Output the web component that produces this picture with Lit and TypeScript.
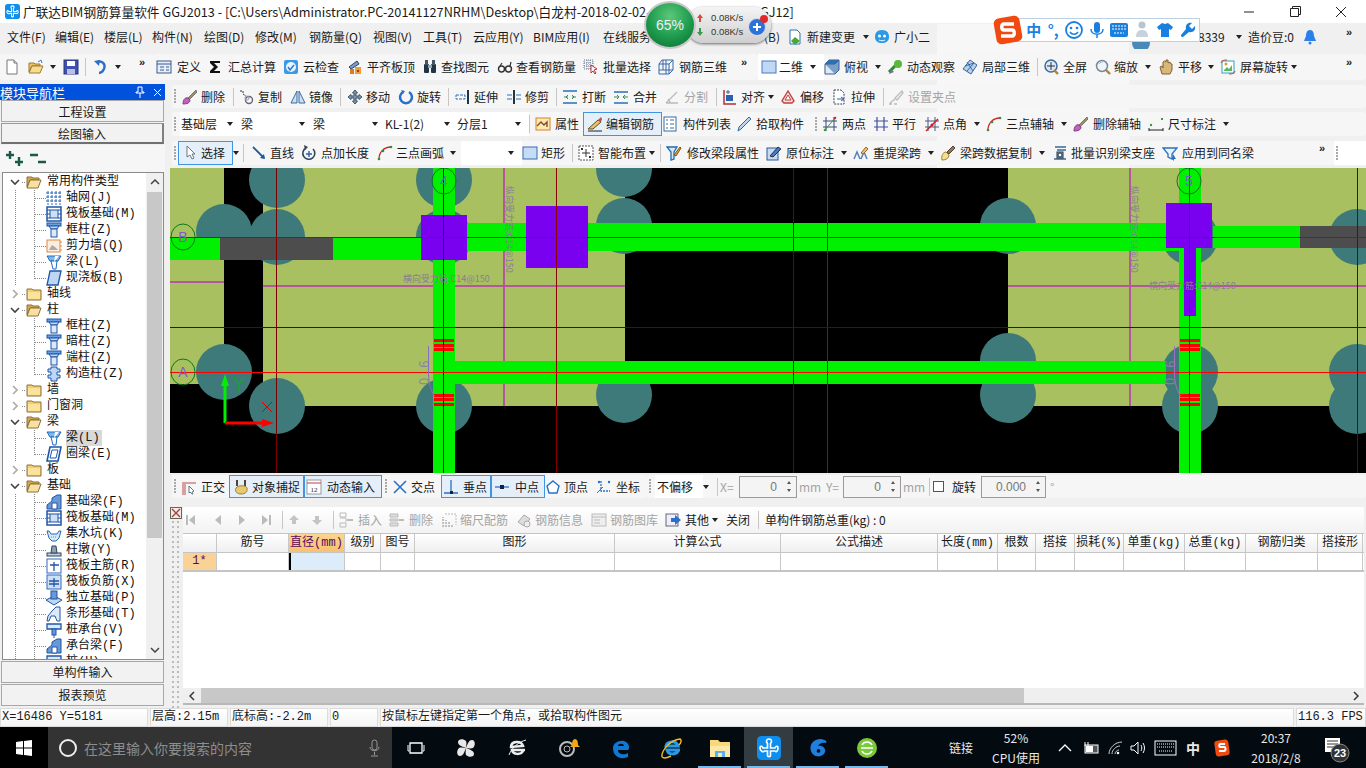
// app.ts - GGJ2013 rebar modelling window
import { LitElement, html, css, svg } from 'lit';
import { customElement } from 'lit/decorators.js';

type Item = { x: number; k: string; v?: any; end?: number; kids?: Item[]; cls?: string };

const I = (x: number, v: string): Item => ({ x, k: 'i', v });
const T = (x: number, v: string, cls = ''): Item => ({ x, k: 't', v, cls });
const A = (x: number): Item => ({ x, k: 'a' });
const S = (x: number): Item => ({ x, k: 's' });
const G = (x: number): Item => ({ x, k: 'g' });
const M = (x: number): Item => ({ x, k: 'm' });
const R = (x: number, v: any): Item => ({ x, k: 'r', v });
const Seg = (x: number, end: number, kids: Item[], cls = ''): Item => ({ x, k: 'seg', end, kids, cls });

const s16 = (body: any) => html`<svg class="ic" width="16" height="16" viewBox="0 0 16 16">${body}</svg>`;

const ICONS: Record<string, any> = {
  new: s16(svg`<path d="M3 1h7l3 3v11H3z" fill="#fff" stroke="#777"/><path d="M10 1v3h3" fill="#ddd" stroke="#777"/>`),
  open: s16(svg`<path d="M1 4h5l1 1h5v2H4L1 13z" fill="#e8c060" stroke="#a07a30"/><path d="M1 14l3-7h11l-3 7z" fill="#f6dc90" stroke="#a07a30"/><path d="M10 3l3-2 1 3" fill="none" stroke="#3a7ac8"/>`),
  save: s16(svg`<rect x="1" y="1" width="14" height="14" fill="#3f51b0" stroke="#2a3580"/><rect x="4" y="2" width="8" height="5" fill="#fff"/><rect x="4" y="10" width="8" height="5" fill="#b8c0e8"/>`),
  undo: s16(svg`<path d="M5 3c5-2 9 2 7 7-1 2-3 4-5 4" fill="none" stroke="#2a70c8" stroke-width="2.4"/><path d="M2 2l6-1-1 6z" fill="#2a70c8"/>`),
  def: s16(svg`<rect x="1" y="2" width="14" height="12" fill="#e8eef8" stroke="#3a5a90"/><path d="M1 5h14M4 8h4M4 11h4M10 8h3M10 11h3" stroke="#3a5a90"/>`),
  sigma: s16(svg`<path d="M3 2h10v2H7l4 4-4 4h6v2H3v-2l4-4-4-4z" fill="#111"/>`),
  cloud: s16(svg`<rect x="1" y="1" width="14" height="14" rx="2" fill="#3a9ae8"/><circle cx="8" cy="8" r="5" fill="#e8f4ff"/><path d="M5 8l2 3 4-5" fill="none" stroke="#2a7ad0" stroke-width="1.5"/>`),
  level: s16(svg`<path d="M2 8l8-6 2 3-8 5z" fill="#7a9ad0" stroke="#345"/><rect x="3" y="10" width="4" height="5" fill="#e07820"/><rect x="8" y="8" width="6" height="7" fill="#e8a030"/><rect x="10" y="11" width="2" height="2" fill="#a33"/>`),
  find: s16(svg`<rect x="2" y="5" width="5" height="9" rx="1" fill="#234"/><rect x="9" y="5" width="5" height="9" rx="1" fill="#234"/><rect x="3" y="1" width="3" height="5" fill="#456"/><rect x="10" y="1" width="3" height="5" fill="#456"/><rect x="6" y="6" width="4" height="3" fill="#8ab"/>`),
  glass: s16(svg`<circle cx="4.5" cy="10" r="3" fill="none" stroke="#333" stroke-width="1.4"/><circle cx="11.5" cy="10" r="3" fill="none" stroke="#333" stroke-width="1.4"/><path d="M3 7l2-3M13 7l1-4M7.5 10h1" stroke="#333" stroke-width="1.2" fill="none"/>`),
  bsel: s16(svg`<path d="M1 1h9v9H1zM1 4h9M1 7h9M4 1v9M7 1v9" fill="none" stroke="#6a7a90" stroke-dasharray="1 1"/><path d="M8 6l6 4-3 1 2 3-1 1-2-3-2 2z" fill="#fff" stroke="#c03030"/>`),
  r3d: s16(svg`<path d="M4 1h11v10l-4 4H1V5zM1 5h10v10M11 5l4-4M5 1v10h10M1 11h4M8 1v14" fill="none" stroke="#3868a8"/>`),
  d2: s16(svg`<rect x="1" y="2" width="14" height="12" fill="#c0d8f4" stroke="#4a7ac0"/>`),
  top: s16(svg`<path d="M1 5l4-4h10l-4 4v10H1z" fill="#dfe9f5" stroke="#345f90"/><path d="M1 5h10l4-4v10l-4 4" fill="#7aa0c8" stroke="#345f90"/><path d="M1 5l4-4h10l-4 4z" fill="#2f6fb0"/>`),
  orbit: s16(svg`<path d="M2 13L13 2" stroke="#2c8a2c" stroke-width="3"/><circle cx="11" cy="5" r="4" fill="#5cb83c"/><path d="M2 15l5-2-3-3z" fill="#678"/>`),
  l3d: s16(svg`<path d="M8 1l7 5-6 9-8-5z" fill="#b8d0ec" stroke="#3a6aa0"/><path d="M5 3l6 9M3 7l9-3M5 12l7-8" stroke="#3a6aa0" fill="none"/>`),
  full: s16(svg`<circle cx="8" cy="7" r="6" fill="#dde8f4" stroke="#3a6aa0" stroke-width="1.5"/><path d="M8 3v8M4 7h8" stroke="#234"/><path d="M11 11l4 4" stroke="#b08040" stroke-width="2.4"/>`),
  zoom: s16(svg`<circle cx="7" cy="7" r="5.5" fill="#eef4fa" stroke="#789" stroke-width="1.5"/><path d="M11 11l4 4" stroke="#b08040" stroke-width="2.4"/><path d="M4 5c1-2 3-2 4-2" stroke="#abc" fill="none"/>`),
  pan: s16(svg`<path d="M4 15L2 8l2-1 1 2V3l1.500-1L8 3v-2h2v3l2-1 1 2 1 0v6l-2 4z" fill="#d8b878" stroke="#806030"/>`),
  rot: s16(svg`<rect x="2" y="2" width="12" height="12" fill="#fff" stroke="#30a0c0"/><path d="M4 11l3-3 2 2 3-4v6H4z" fill="#5cb85c"/><circle cx="6" cy="5" r="1.500" fill="#e0a020"/><path d="M1 4c1-3 4-3 6-3M15 12c-1 3-4 3-6 3" stroke="#d03030" fill="none"/>`),
  del: s16(svg`<path d="M15 1L7 9l1 2 8-8z" fill="#a09060" stroke="#777"/><path d="M2 15c0-4 2-7 5-6l2 2c0 3-3 4-7 4z" fill="#c060c0" stroke="#804080"/>`),
  copy: s16(svg`<circle cx="11" cy="11" r="3.500" fill="none" stroke="#667" stroke-width="1.400"/><circle cx="9" cy="9" r="2" fill="none" stroke="#99a"/><path d="M2 2h3v3M5 5l3 2" stroke="#334" fill="none" stroke-dasharray="2 1"/>`),
  mirror: s16(svg`<path d="M7 2v12H1zM9 2v12h6z" fill="#cde0f4" stroke="#3a6aa0"/>`),
  move: s16(svg`<path d="M8 1l2.500 3H9v3h3V5.500L15 8l-3 2.500V9H9v3h1.500L8 15l-2.500-3H7V9H4v1.500L1 8l3-2.500V7h3V4H5.500z" fill="#7a96b0" stroke="#456"/>`),
  rotate: s16(svg`<path d="M5 3a6 6 0 1 0 6 0" fill="none" stroke="#2a70c8" stroke-width="2.500"/><path d="M3 1l4 1-2 3z" fill="#2a70c8"/>`),
  extend: s16(svg`<path d="M1 6h9v4H1z" fill="none" stroke="#2a70b8" stroke-dasharray="3 1"/><path d="M13 1v14" stroke="#234" stroke-width="2"/>`),
  trim: s16(svg`<path d="M1 6h5M1 10h5M10 6h5M10 10h5" stroke="#2a70b8"/><path d="M8 1v14" stroke="#234" stroke-width="2"/>`),
  brk: s16(svg`<path d="M1 2h14M1 14h14" stroke="#2a70b8" stroke-width="1.500"/><path d="M2 8h4M14 8h-4M6 6l-2 2 2 2M10 6l2 2-2 2" stroke="#3a8a5a" fill="none"/>`),
  merge: s16(svg`<path d="M1 3h14M1 14h14" stroke="#2a70b8" stroke-width="1.500"/><path d="M1 8h5M15 8h-5M4 6l2 2-2 2M12 6l-2 2 2 2" stroke="#3a8a5a" fill="none"/>`),
  split: s16(svg`<path d="M2 14L13 3M2 14h12M6 14c0-2-1-3-2-4" stroke="#bbb" fill="none" stroke-width="1.300"/>`),
  align: s16(svg`<path d="M2 1v14h12" stroke="#b03030" stroke-width="1.500" fill="none"/><rect x="4" y="6" width="7" height="6" fill="#2a60b0"/><path d="M6 1v4M4 3h4" stroke="#2a60b0"/>`),
  offset: s16(svg`<path d="M8 2l6 10-2 2H4l-2-2z" fill="#f8e0d8" stroke="#c04040" stroke-width="1.400"/><path d="M8 6l3 5H5z" fill="#fff" stroke="#c04040"/>`),
  stretch: s16(svg`<path d="M3 1h7l3 3v11H3z" fill="#fff" stroke="#345" stroke-dasharray="2 1"/><path d="M6 10h7M10 8l3 2-3 2" stroke="#2a60b0" fill="none"/>`),
  grip: s16(svg`<path d="M14 2L7 9l2 2 6-7zM2 14l5-4M1 15h3M6 15h3" stroke="#bbb" fill="none" stroke-width="1.300"/>`),
  prop: s16(svg`<rect x="1" y="2" width="14" height="12" fill="#fde8b8" stroke="#d88020"/><path d="M2 10l4-4 3 3 3-3v5" fill="none" stroke="#805020" stroke-width="1.400"/>`),
  rebar: s16(svg`<path d="M1 13l10-9 3 2-8 7z" fill="#e8c070" stroke="#605020"/><path d="M11 4l3-3 1 2-1 3z" fill="#c05050"/><path d="M1 15h14" stroke="#222"/>`),
  list: s16(svg`<rect x="2" y="1" width="12" height="14" fill="#fff" stroke="#3a6aa0"/><path d="M4 4h2M8 4h4M4 8h2M8 8h4M4 12h2M8 12h4" stroke="#3a6aa0"/>`),
  pick: s16(svg`<path d="M13 1l2 2-3 3-1 1-6 6-3 2 1-4 6-6 1-1z" fill="#bcd4ee" stroke="#2a6ab0"/>`),
  two: s16(svg`<path d="M4 1v14M12 1v14M1 5h14M1 11h14" stroke="#3a4a80"/><path d="M3 14L13 2" stroke="#3a9a3a"/><circle cx="13" cy="2" r="1.300" fill="#c03030"/><circle cx="3" cy="14" r="1.300" fill="#3a9a3a"/>`),
  para: s16(svg`<path d="M4 1v14M11 1v14M1 5h14M1 11h14" stroke="#4050a0" stroke-width="1.200"/>`),
  angle: s16(svg`<path d="M4 1v14M11 1v14M1 5h14M1 11h14" stroke="#4a5a88"/><path d="M2 15L14 3" stroke="#d02020" stroke-width="1.500"/><circle cx="8" cy="9" r="1.500" fill="#d02020"/>`),
  arc3: s16(svg`<path d="M2 14C2 7 7 2 14 2" fill="none" stroke="#d02020" stroke-width="1.300"/><circle cx="2" cy="14" r="1.300" fill="#3a8a3a"/><circle cx="6" cy="6" r="1.300" fill="#3a8a3a"/><circle cx="14" cy="2" r="1.300" fill="#3a8a3a"/>`),
  dim: s16(svg`<path d="M1 12v3M15 12v3M1 14h14" stroke="#222"/><circle cx="3" cy="9" r="1.200" fill="#3a9a3a"/><rect x="13" y="2" width="2" height="2" fill="#3a9a3a"/>`),
  select: s16(svg`<path d="M4 1v11l3-2 2 4 2-1-2-4h3z" fill="#fff" stroke="#678"/>`),
  line: s16(svg`<path d="M2 2l11 11" stroke="#1e5a98" stroke-width="1.800"/><path d="M14 14l-5-1 4-4z" fill="#1e5a98"/>`),
  ptlen: s16(svg`<path d="M5 3a6 6 0 1 0 7 1" fill="none" stroke="#345" stroke-width="1.600"/><path d="M8 6v6M5 9h6" stroke="#2a60b0" stroke-width="1.400"/><path d="M3 0l4 2-3 3z" fill="#345"/>`),
  rect: s16(svg`<rect x="1" y="2" width="14" height="12" fill="#c4dcf6" stroke="#3a6ab0"/>`),
  smart: s16(svg`<rect x="1" y="1" width="14" height="14" fill="#fff" stroke="#555" stroke-dasharray="2 1"/><path d="M8 4v8M4 8h8" stroke="#333"/><rect x="3" y="3" width="2" height="2" fill="#333"/><rect x="11" y="11" width="2" height="2" fill="#333"/>`),
  funnel: s16(svg`<path d="M1 2h10l-3 5v7l-3 1V7z" fill="#d8e8f8" stroke="#1f6ab0" stroke-width="1.300"/><path d="M8 10l6-8 1 1-5 8z" fill="#e0a030" stroke="#805020"/>`),
  inplace: s16(svg`<rect x="1" y="3" width="11" height="12" fill="#c8daf0" stroke="#2a5a9a"/><path d="M4 11l8-9 3 2-8 8z" fill="#4a78c0" stroke="#234"/>`),
  rspan: s16(svg`<path d="M1 14l3-7 3 7M8 14l3-7 3 7" fill="none" stroke="#5a80b8" stroke-width="1.500"/><path d="M8 8l5-6 2 2-5 5z" fill="#e8c080" stroke="#a06030"/>`),
  brush: s16(svg`<path d="M2 15c-1-4 1-8 4-8l3 3c0 3-3 5-7 5z" fill="#f0e090" stroke="#a08030"/><path d="M7 7l6-6 2 2-6 6z" fill="#8a7a60" stroke="#543"/>`),
  bident: s16(svg`<path d="M3 2h11M5 5h9M2 14h12" stroke="#3a6a9a" stroke-width="1.500"/><rect x="5" y="7" width="6" height="6" fill="#8ab0d0" stroke="#234"/><circle cx="8" cy="10" r="2" fill="#fff" stroke="#234"/>`),
  same: s16(svg`<path d="M1 3h14l-5 6v5l-4-2V9z" fill="#e8f2fb" stroke="#2a70c0" stroke-width="1.300"/><path d="M11 9l3 5-2 0 0 2-2-2z" fill="#2a70c0"/>`),
  ortho: s16(svg`<path d="M1 3h14v2H5v11H1z" fill="#d8a0a0"/><path d="M8 7l5 5-2 1 1 2-1 0-2-2-1 1z" fill="#fff" stroke="#678"/>`),
  snap: s16(svg`<path d="M4 1v6M12 1v6" stroke="#543" stroke-width="2"/><path d="M3 9c2-3 10-3 11 0 1 4-2 6-6 6-3 0-7-2-5-6z" fill="#e8c870" stroke="#a08030"/>`),
  dyn: s16(svg`<rect x="1" y="1" width="14" height="14" fill="#fff" stroke="#999"/><path d="M1 4h14" stroke="#c04040"/><text x="8" y="13" font-size="7" text-anchor="middle" font-family="Liberation Serif" fill="#222">12</text>`),
  cross: s16(svg`<path d="M2 2l12 12M14 2L2 14" stroke="#2a70c8" stroke-width="1.600"/>`),
  perp: s16(svg`<path d="M8 1v13M1 14h14" stroke="#2a70c8" stroke-width="1.300"/><rect x="7" y="12" width="3" height="3" fill="#124"/>`),
  mid: s16(svg`<path d="M1 8h14" stroke="#2a70c8" stroke-width="1.300"/><rect x="6" y="6" width="4" height="4" fill="#124"/>`),
  vert: s16(svg`<path d="M8 2l6 5-2 7H4L2 7z" fill="#fff" stroke="#2a70c8" stroke-width="1.400"/>`),
  coord: s16(svg`<path d="M5 2v10h9" stroke="#2a70c8" stroke-width="1.300" fill="none" stroke-dasharray="2 1"/><path d="M1 14l6-6" stroke="#2a70c8"/><circle cx="3" cy="3" r="1.200" fill="#2a70c8"/><circle cx="13" cy="3" r="1.200" fill="#2a70c8"/>`),
  first: s16(svg`<path d="M4 3v10" stroke="#bbb" stroke-width="2"/><path d="M12 3v10L6 8z" fill="#bbb"/>`),
  prev: s16(svg`<path d="M11 3v10L5 8z" fill="#bbb"/>`),
  next: s16(svg`<path d="M5 3v10l6-5z" fill="#bbb"/>`),
  last: s16(svg`<path d="M12 3v10" stroke="#bbb" stroke-width="2"/><path d="M4 3v10l6-5z" fill="#bbb"/>`),
  up: s16(svg`<path d="M8 3l5 5h-3v4H6V8H3z" fill="#c4c4c4"/>`),
  down: s16(svg`<path d="M8 13l5-5h-3V4H6v4H3z" fill="#c4c4c4"/>`),
  ins: s16(svg`<path d="M2 1h6v4H2zM2 11h6v4H2zM2 6h6v4" fill="none" stroke="#bbb"/><path d="M9 8h6" stroke="#bbb" stroke-width="2"/>`),
  rem: s16(svg`<path d="M1 2h8v3H1zM1 7h8v2H1zM1 11h8v3H1z" fill="#ddd" stroke="#bbb"/><path d="M10 8h5" stroke="#bbb" stroke-width="2"/>`),
  scale: s16(svg`<path d="M1 15V5M4 15V8M7 15v-5M10 15v-2" stroke="#aaa" stroke-width="1.400" stroke-dasharray="2 1"/><path d="M3 2h11v11" stroke="#bbb" fill="none" stroke-dasharray="2 1"/>`),
  info: s16(svg`<path d="M2 10l6-7 6 4-6 7z" fill="#ddd" stroke="#aaa"/><circle cx="11" cy="12" r="3" fill="#eee" stroke="#aaa"/>`),
  lib: s16(svg`<rect x="1" y="2" width="14" height="12" fill="#eee" stroke="#bbb"/><path d="M1 5h14M3 8h6M3 11h6" stroke="#bbb"/>`),
  other: s16(svg`<rect x="1" y="2" width="12" height="12" fill="#eef" stroke="#667"/><path d="M6 6h4V3l6 5-6 5v-3H6z" fill="#2a70c8"/>`),
  newchg: s16(svg`<path d="M3 1h7l3 3v11H3z" fill="#fff" stroke="#2a70b8"/><path d="M8 8l5 4-5 4-4-4z" fill="#4aa83a"/>`),
  xiao: s16(svg`<path d="M8 1c5 0 7 3 7 7 0 4-3 6-7 6s-7-2-7-6c0-4 2-7 7-7z" fill="#2a9ae8"/><circle cx="5.500" cy="7" r="1.500" fill="#fff"/><circle cx="10.500" cy="7" r="1.500" fill="#fff"/><path d="M5 11c2 1 4 1 6 0" stroke="#fff" fill="none"/>`),
  bell: s16(svg`<path d="M8 1c3 0 4 3 4 6l2 5H2l2-5c0-3 1-6 4-6z" fill="#2a80e8"/><circle cx="8" cy="14" r="1.500" fill="#2a80e8"/>`),
};

const TREE: Record<string, any> = {
  grid: s16(svg`<path d="M2 1v14M6 1v14M10 1v14M14 1v14M0 3h16M0 7h16M0 11h16" stroke="#2f6ac0" fill="none" stroke-dasharray="3 1"/>`),
  raft: s16(svg`<rect x="1" y="1" width="14" height="14" fill="#fff" stroke="#1f55a8" stroke-width="1.500"/><rect x="4" y="4" width="8" height="8" fill="#cfe0f4" stroke="#1f55a8"/><path d="M1 4h3M1 8h3M1 12h3M12 4h3M12 8h3M12 12h3" stroke="#1f55a8"/>`),
  col: s16(svg`<rect x="1" y="1" width="14" height="3" fill="#6aa0e0" stroke="#1f55a8"/><path d="M3 4h10L11 7H5z" fill="#bcd6f4" stroke="#1f55a8"/><rect x="5" y="7" width="6" height="8" fill="#dbe9f8" stroke="#1f55a8"/>`),
  wall: s16(svg`<rect x="1" y="2" width="13" height="12" fill="#fbeee0" stroke="#e08840"/><path d="M3 12l3-5 3 2 3 3z" fill="#aaa"/><path d="M14 4h2M14 8h2M14 12h2" stroke="#e08840"/>`),
  beam: s16(svg`<path d="M1 2h14l-3 5H4z" fill="#7ab8ee" stroke="#1f6ac0"/><path d="M5 7h6l-1 8H7z" fill="#fff" stroke="#1f6ac0"/><path d="M9 2l4 0-5 6z" fill="#fff"/>`),
  slab: s16(svg`<path d="M4 1h11l-3 14H1z" fill="#bcd6f4" stroke="#1f55a8" stroke-width="1.300"/>`),
  ccol: s16(svg`<path d="M5 1h6v2h3v3h-3v3h3v3h-3v3H5v-3H2V9h3V6H2V3h3z" fill="#bcd6f4" stroke="#1f55a8"/>`),
  ring: s16(svg`<path d="M4 1h11l-3 14H1z" fill="#fff" stroke="#1f55a8" stroke-width="1.600"/><path d="M6 4h6l-2 8H4z" fill="#fff" stroke="#1f55a8"/>`),
  fbeam: s16(svg`<path d="M1 15V11l5-4V4l5-3h4v14z" fill="#6a98d4" stroke="#1f55a8"/><path d="M6 15V9h5v6z" fill="#fff" stroke="#1f55a8"/>`),
  pit: s16(svg`<path d="M1 5l2 0 2 3h6l2-3h2l-2 7-3 3H6l-3-3z" fill="#d8e8f8" stroke="#1f6ac0"/><path d="M5 11h6" stroke="#888" stroke-dasharray="1 1"/>`),
  pier: s16(svg`<rect x="1" y="11" width="14" height="3" fill="#c4d0e0" stroke="#345"/><path d="M6 4h4l1 7H5z" fill="#8aa0bc" stroke="#345"/>`),
  rmain: s16(svg`<rect x="1" y="1" width="14" height="14" fill="#fff" stroke="#2f6ac0"/><path d="M4 7h9M8 4v9" stroke="#1f55a8" stroke-width="1.300"/>`),
  rneg: s16(svg`<rect x="1" y="1" width="14" height="14" fill="#cfe0f4" stroke="#2f6ac0"/><path d="M3 7h10M3 10h10M8 4v9" stroke="#1f55a8" stroke-width="1.300"/>`),
  iso: s16(svg`<path d="M0 10l8-4 8 4-8 5z" fill="#bcd6f4" stroke="#1f55a8"/><rect x="5" y="1" width="6" height="8" fill="#6a98d4" stroke="#1f55a8"/>`),
  strip: s16(svg`<path d="M1 15l1-5 4-5 4-4h4v14h-3l-2-5-4 0-2 5z" fill="#dbe9f8" stroke="#1f55a8"/>`),
  cap: s16(svg`<path d="M1 2h14v5H1z" fill="#dbe9f8" stroke="#1f55a8" stroke-width="1.300"/><rect x="6" y="7" width="4" height="6" fill="#6a98d4" stroke="#1f55a8"/><path d="M8 13v3" stroke="#1f55a8"/>`),
};

const gld = (n: number) => html`<svg class="ic" width=${n} height=${n} viewBox="0 0 16 16"><rect width="16" height="16" rx="3" fill="#0e8ff0"/><path d="M8 2c-2 0-2 2-1 3v3H4C3 6 2 7 2 8c0 2 2 3 3 2h2v3c0 1 2 1 2 0v-3h3c1 1 2 0 2-2 0-1-1-2-2 0H9V5c1-1 1-3-1-3z" fill="none" stroke="#fff" stroke-width="1.100"/></svg>`;

const TITLE: Item[] = [
  T(23, '广联达BIM钢筋算量软件 GGJ2013 - [C:\\Users\\Administrator.PC-20141127NRHM\\Desktop\\白龙村-2018-02-02-'),
  T(760, 'GJ12]'),
];

const ROW1: Item[] = [
  Seg(0, 152, [I(4, 'new'), I(28, 'open'), A(50), I(63, 'save'), S(85), I(92, 'undo'), A(115), M(139)]),
  Seg(153, 754, [I(156, 'def'), T(177, '定义'), I(207, 'sigma'), T(228, '汇总计算'), I(283, 'cloud'), T(303, '云检查'), I(347, 'level'), T(367, '平齐板顶'),
    I(422, 'find'), T(441, '查找图元'), I(497, 'glass'), T(516, '查看钢筋量'), I(583, 'bsel'), T(603, '批量选择'), I(658, 'r3d'), T(679, '钢筋三维'), M(741)]),
  Seg(757, 1366, [Seg(758, 820, [I(761, 'd2'), T(779, '二维'), A(810)], 'white'), I(824, 'top'), T(844, '俯视'), A(875), I(887, 'orbit'), T(907, '动态观察'), I(962, 'l3d'), T(982, '局部三维'),
    S(1037), I(1043, 'full'), T(1063, '全屏'), I(1095, 'zoom'), T(1114, '缩放'), A(1145), I(1158, 'pan'), T(1178, '平移'), A(1208), I(1220, 'rot'), T(1240, '屏幕旋转'), A(1291), M(1346)]),
];

const ROW2: Item[] = [
  Seg(172, 961, [G(174), I(181, 'del'), T(201, '删除'), S(233), I(238, 'copy'), T(258, '复制'), I(290, 'mirror'), T(309, '镜像'), S(340), I(347, 'move'), T(366, '移动'), I(398, 'rotate'), T(417, '旋转'),
    S(448), I(455, 'extend'), T(474, '延伸'), I(506, 'trim'), T(525, '修剪'), S(556), I(562, 'brk'), T(582, '打断'), I(613, 'merge'), T(633, '合并'), I(664, 'split'), T(684, '分割', 'dis'),
    S(716), I(722, 'align'), T(741, '对齐'), A(768), I(780, 'offset'), T(800, '偏移'), I(831, 'stretch'), T(851, '拉伸'), S(883), I(888, 'grip'), T(908, '设置夹点', 'dis')]),
];

const ROW3: Item[] = [
  Seg(172, 808, [G(174), Seg(180, 238, [T(181, '基础层'), A(227)], 'white'), Seg(239, 308, [T(241, '梁'), A(299)], 'white'), Seg(311, 380, [T(313, '梁'), A(372)], 'white'),
    Seg(383, 452, [T(385, 'KL-1(2)'), A(444)], 'white'), Seg(455, 525, [T(457, '分层1'), A(515)], 'white'), S(529), I(535, 'prop'), T(555, '属性'),
    Seg(583, 658, [I(587, 'rebar'), T(606, '编辑钢筋')], 'on'), I(662, 'list'), T(683, '构件列表'), I(736, 'pick'), T(756, '拾取构件')]),
  Seg(811, 1233, [G(815), I(822, 'two'), T(842, '两点'), I(873, 'para'), T(892, '平行'), I(924, 'angle'), T(943, '点角'), A(974), I(986, 'arc3'), T(1006, '三点辅轴'), A(1061), I(1072, 'del'), T(1093, '删除辅轴'), I(1148, 'dim'), T(1168, '尺寸标注'), A(1223)]),
];

const ROW4: Item[] = [
  Seg(172, 1332, [G(174), Seg(178, 229, [I(183, 'select'), T(201, '选择')], 'on'), A(233), S(243), I(251, 'line'), T(270, '直线'), I(301, 'ptlen'), T(321, '点加长度'), I(377, 'arc3'), T(396, '三点画弧'), A(450),
    Seg(461, 517, [A(508)], 'white'), I(522, 'rect'), T(541, '矩形'), S(572), I(578, 'smart'), T(598, '智能布置'), A(649), S(660), I(666, 'funnel'), T(687, '修改梁段属性'), I(766, 'inplace'), T(786, '原位标注'), A(841),
    I(853, 'rspan'), T(873, '重提梁跨'), A(928), I(940, 'brush'), T(960, '梁跨数据复制'), A(1039), I(1052, 'bident'), T(1071, '批量识别梁支座'), I(1162, 'same'), T(1182, '应用到同名梁'), M(1319)]),
  Seg(1334, 1366, [G(1336)], 'white'),
];

const spin = (w: number, v: string) => html`<span class="num" style="width:${w}px"><b>${v}</b><i class="sp"><u class="tu"></u><u class="td"></u></i></span>`;

const SNAP: Item[] = [
  Seg(172, 382, [G(174), I(181, 'ortho'), T(201, '正交'), Seg(229, 304, [I(233, 'snap'), T(252, '对象捕捉')], 'on'), Seg(304, 379, [I(306, 'dyn'), T(327, '动态输入')], 'on')]),
  Seg(383, 643, [G(385), I(392, 'cross'), T(411, '交点'), Seg(441, 491, [I(443, 'perp'), T(463, '垂点')], 'on'), Seg(491, 542, [I(494, 'mid'), T(515, '中点')], 'on'), I(545, 'vert'), T(564, '顶点'), I(596, 'coord'), T(616, '坐标')]),
  Seg(646, 1058, [G(649), Seg(655, 700, [T(657, '不偏移')], 'white'), A(703), S(717), T(720, 'X=', 'dis'), R(739, spin(58, '0')), T(799, 'mm', 'dis'), T(826, 'Y=', 'dis'), R(843, spin(58, '0')), T(903, 'mm', 'dis'), S(929),
    R(933, html`<span class="chk"></span>`), T(952, '旋转'), R(981, spin(65, '0.000')), T(1050, '°', 'dis')]),
];

const GRIDBAR: Item[] = [
  I(182, 'first'), I(209, 'prev'), I(233, 'next'), I(257, 'last'), S(281), I(285, 'up'), I(308, 'down'), S(332), I(337, 'ins'), T(357, '插入', 'dis'), I(388, 'rem'), T(408, '删除', 'dis'),
  I(441, 'scale'), T(459, '缩尺配筋', 'dis'), I(515, 'info'), T(534, '钢筋信息', 'dis'), I(590, 'lib'), T(609, '钢筋图库', 'dis'), I(664, 'other'), T(684, '其他'), A(711), T(725, '关闭'), S(757), T(764, '单构件钢筋总重(kg) : 0'),
];

const avatar = html`<svg width="24" height="24" viewBox="0 0 24 24"><circle cx="12" cy="18" r="9" fill="#4a8ab8"/></svg>`;

const MENU: Item[] = [
  T(7, '文件(F)'), T(55, '编辑(E)'), T(104, '楼层(L)'), T(152, '构件(N)'), T(204, '绘图(D)'), T(255, '修改(M)'), T(309, '钢筋量(Q)'), T(373, '视图(V)'), T(423, '工具(T)'), T(473, '云应用(Y)'), T(533, 'BIM应用(I)'),
  T(603, '在线服务'), T(764, '(B)'), I(787, 'newchg'), T(807, '新建变更'), A(863), I(874, 'xiao'), T(894, '广小二'),
  Seg(937, 1125, [T(966, '自动生成钢筋相关操作', 'grn')], 'panel'), R(1129, avatar), T(1198, '8339'), A(1236), T(1248, '造价豆:0'), I(1302, 'bell'), M(1346),
];

type Node = [number, string, string, string?];
const NODES: Node[] = [
  [0, '常用构件类型', 'o'], [1, '轴网(J)', 'grid'], [1, '筏板基础(M)', 'raft'], [1, '框柱(Z)', 'col'], [1, '剪力墙(Q)', 'wall'], [1, '梁(L)', 'beam'], [2, '现浇板(B)', 'slab'],
  [0, '轴线', 'c'], [0, '柱', 'o'], [1, '框柱(Z)', 'col'], [1, '暗柱(Z)', 'col'], [1, '端柱(Z)', 'col'], [2, '构造柱(Z)', 'ccol'],
  [0, '墙', 'c'], [0, '门窗洞', 'c'], [0, '梁', 'o'], [1, '梁(L)', 'beam', 'sel'], [2, '圈梁(E)', 'ring'], [0, '板', 'c'],
  [0, '基础', 'o'], [1, '基础梁(F)', 'fbeam'], [1, '筏板基础(M)', 'raft'], [1, '集水坑(K)', 'pit'], [1, '柱墩(Y)', 'pier'], [1, '筏板主筋(R)', 'rmain'], [1, '筏板负筋(X)', 'rneg'],
  [1, '独立基础(P)', 'iso'], [1, '条形基础(T)', 'strip'], [1, '桩承台(V)', 'cap'], [1, '承台梁(F)', 'fbeam'], [1, '桩(U)', 'cap'],
];

const COLS: [number, string, string?][] = [
  [34, ''], [72, '筋号'], [56, '直径(mm)', 'hot'], [36, '级别'], [34, '图号'], [200, '图形'], [166, '计算公式'], [157, '公式描述'], [60, '长度(mm)'], [38, '根数'], [39, '搭接'], [49, '损耗(%)'], [61, '单重(kg)'], [61, '总重(kg)'], [72, '钢筋归类'], [45, '搭接形'],
];

const TEAL: [number, number][] = [[107, 12], [54, 64], [107, 69], [274, 12], [274, 69], [454, 1], [454, 58], [54, 204], [107, 238], [274, 238], [454, 227], [838, 58], [838, 193], [838, 227], [1020, 69], [1020, 204], [1020, 238], [1187, 69], [1187, 204], [1187, 238]];
const STRIPES = [171, 176, 180, 226, 230, 235];
const AXES: [number, number, string][] = [[13, 69, 'B'], [13, 204, 'A'], [274, 13, '4'], [1019, 13, '5']];

const rects = (list: [number, number, number, number][], fill: string) => list.map(([x, y, w, h]) => svg`<rect x=${x} y=${y} width=${w} height=${h} fill=${fill}/>`);

@customElement('app-root')
export class AppRoot extends LitElement {
  static styles = css`
    :host { display: block; width: 1366px; height: 768px; overflow: hidden; position: relative; background: #f0f0f0; color: #1a1a1a;
      font: 12px/16px "Noto Sans CJK SC", "Liberation Sans", sans-serif; }
    * { box-sizing: border-box; }
    svg { display: block; flex: none; }
    .title { display: flex; align-items: center; height: 23px; background: #fff; padding-left: 5px; white-space: nowrap; position: relative; font-size: 12.7px; }
    .winbtns { margin-left: auto; display: flex; height: 100%; padding-right: 2px; }
    .winbtns span { width: 46px; display: flex; align-items: center; justify-content: center; }
    .row { display: flex; align-items: stretch; white-space: nowrap; }
    .menu { height: 29px; padding: 1px 0 3px; }
    .tb1 { height: 32px; padding: 2px 0 4px; }
    .r2 { height: 26px; padding: 1px 0 2px; }
    .r3 { height: 28px; padding: 2px 0; }
    .r4 { height: 30px; padding: 3px 0 3px; }
    .it { display: flex; align-items: center; flex: none; height: 100%; }
    .seg { background: #f6f6f6; border-radius: 3px; }
    .seg.white { background: #fff; border-radius: 0; }
    .seg.on { background: #e4eff9; box-shadow: inset 0 0 0 1px #3f94e6; border-radius: 0; }
    .seg.panel { background: #f7f7f7; }
    .dis { color: #a4a4a4; }
    .grn { color: #3c6a10; }
    .sep { width: 1px; height: 18px; background: #c6c6c6; }
    .grip { width: 4px; height: 15px; background: radial-gradient(circle at 1px 1px, #a8a8a8 1px, transparent 1.200px) 0 0 / 4px 3px; }
    .arr { width: 0; height: 0; border: 3px solid transparent; border-top: 4px solid #222; border-bottom: 0; }
    .more { font: 11px/12px "Liberation Sans", sans-serif; font-weight: 700; color: #222; letter-spacing: -1px; transform: translateY(-5px); }
    .main { display: flex; height: 624px; }
    .side { width: 165px; flex: none; display: flex; flex-direction: column; }
    .nav-h { height: 16px; background: #0052dc; color: #fff; font-size: 13px; line-height: 15px; display: flex; align-items: center; letter-spacing: 0; }
    .nav-h .tools { margin-left: auto; display: flex; gap: 8px; padding-right: 3px; align-items: center; }
    .btn { height: 22px; flex: none; margin: 0 0 1px 1px; width: 163px; text-align: center; line-height: 21px; background: #f2f2f2; border: 1px solid #a8a8a8; font-size: 12px; }
    .btn.act { height: 21px; line-height: 19px; border-color: #9a9a9a #808080 #707070 #9a9a9a; border-width: 1px 2px 2px 1px; }
    .btn.gap { margin-top: 1px; line-height: 20px; }
    .btn.end { line-height: 20px; }
    .plus { height: 27px; flex: none; display: flex; align-items: center; gap: 6px; padding-left: 6px; background: #f6f6f6; }
    .tree { height: 488px; flex: none; margin-left: 2px; width: 162px; border: 1px solid #8a8a8a; background: #fff; display: flex; overflow: hidden; }
    .nodes { width: 143px; flex: none; padding-top: 1px; overflow: hidden; }
    .nd { height: 16px; display: flex; align-items: center; white-space: nowrap; font: 12px/16px "Liberation Mono", "Noto Sans CJK SC", monospace; color: #111; }
    .nd.root { padding-left: 6px; }
    .nd.kid { padding-left: 32px; background:
      linear-gradient(#888 50%, transparent 50%) 12px 0 / 1px 2px repeat-y,
      linear-gradient(#888 50%, transparent 50%) 31px 0 / 1px 2px repeat-y; }
    .nd.last { padding-left: 32px; background: linear-gradient(#888 50%, transparent 50%) 12px 0 / 1px 2px repeat-y; }
    .nd.last .hz { position: relative; }
    .nd.last .hz::before { content: ''; position: absolute; left: -1px; top: -8px; height: 8px; border-left: 1px dotted #888; }
    .hz { width: 11px; border-top: 1px dotted #888; flex: none; }
    .chev { width: 12px; flex: none; }
    .hz2 { width: 3px; border-top: 1px dotted #888; flex: none; margin: 0 1px; }
    .lbl { margin-left: 5px; padding: 0 2px 0 0; }
    .nd.kid .lbl, .nd.last .lbl { margin-left: 4px; }
    .nd.sel .lbl { background: #d9d9d9; }
    .tsb { width: 17px; flex: none; background: #f0f0f0; display: flex; flex-direction: column; align-items: center; }
    .tsb .thumb { width: 15px; height: 346px; background: #c8c8c8; margin-top: 1px; flex: none; }
    .tsb .sa { height: 18px; flex: none; display: flex; align-items: center; justify-content: center; }
    .tsb .fill { flex: 1; }
    .work { flex: 1; min-width: 0; display: flex; flex-direction: column; }
    .canvas { height: 305px; flex: none; margin-left: 5px; background: #000; }
    .canvas text { font-family: "Noto Sans CJK SC", "Liberation Sans", sans-serif; }
    .snap { height: 27px; padding: 2px 0; }
    .num { height: 22px; border: 1px solid #9a9a9a; background: #f4f4f4; display: flex; align-items: center; justify-content: flex-end; color: #777; }
    .num b { font-weight: 400; margin-right: 6px; font-family: "Liberation Sans", sans-serif; font-size: 12px; }
    .sp { width: 12px; display: flex; flex-direction: column; gap: 5px; align-items: center; font-style: normal; margin-right: 1px; }
    .tu, .td { width: 0; height: 0; border: 2px solid transparent; display: block; }
    .tu { border-bottom: 3px solid #555; border-top: 0; }
    .td { border-top: 3px solid #555; border-bottom: 0; }
    .chk { width: 11px; height: 11px; border: 1px solid #555; background: #fff; }
    .bottom { flex: 1; margin-top: 7px; display: flex; margin-left: 5px; min-height: 0; }
    .strip { width: 13px; flex: none; display: flex; flex-direction: column; }
    .dots { flex: 1; width: 10px; margin: 2px 0 0 2px; background: radial-gradient(circle at 1px 1px, #bcbcbc 1px, transparent 1.200px) 0 0 / 5px 5px; }
    .panel { width: 1181px; flex: none; height: 198px; display: flex; flex-direction: column; border-bottom: 2px solid #b8b8b8; }
    .gbar { height: 26px; flex: none; padding: 0; background: linear-gradient(#fff, #f2f2f2); }
    .thead, .trow { display: flex; flex: none; border-bottom: 1px solid #c4c4c4; }
    .thead { height: 20px; border-top: 1px solid #c4c4c4; background: linear-gradient(#fff, #efefef); }
    .trow { height: 19px; background: #fff; border-bottom-width: 2px; }
    .c { flex: none; border-right: 1px solid #c8c8c8; text-align: center; font: 12px/18px "Liberation Mono", "Noto Sans CJK SC", monospace; overflow: hidden; white-space: nowrap; }
    .c.hot { background: linear-gradient(#fad58f, #f6c272); color: #5a0a5a; }
    .c.rn { background: #f9d396; color: #5a0a5a; line-height: 17px; }
    .c.cur { background: #dcecfb; border-left: 2px solid #000; }
    .blank { flex: 1; background: #fff; }
    .hsb { height: 15px; flex: none; background: #efefef; display: flex; align-items: center; }
    .hsb .thumb { height: 100%; width: 823px; margin-left: 0; background: #c8c8c8; }
    .hsb .sa { width: 18px; display: flex; justify-content: center; flex: none; }
    .hsb .sa.end { margin-left: auto; }
    .status { display: flex; height: 19px; gap: 2px; }
    .st { flex: none; height: 19px; background: linear-gradient(#fff, #f4f4f4); border: 1px solid #dcdcdc; font: 12px/17px "Liberation Mono", "Noto Sans CJK SC", monospace; white-space: nowrap; overflow: hidden; padding-left: 1px; }
    .task { height: 41px; display: flex; background: #040b10; color: #fff; }
    .start { width: 48px; flex: none; background: #000; display: flex; align-items: center; justify-content: center; }
    .search { width: 344px; flex: none; background: #333; display: flex; align-items: center; padding-left: 11px; color: #8d8d8d; font-size: 14px; }
    .ring { width: 18px; height: 18px; border-radius: 50%; border: 2px solid #eee; margin-right: 7px; flex: none; }
    .search .mic { margin-left: auto; margin-right: 12px; }
    .tk { flex: none; height: 41px; display: flex; align-items: center; justify-content: center; position: relative; }
    .tk.open::after { content: ''; position: absolute; left: 3px; right: 3px; bottom: 0; height: 2px; background: #76b9ed; }
    .tk.on { background: #333c40; }
    .tray { color: #e8e8e8; flex: 1; }
    .cpu { text-align: center; line-height: 20px; width: 50px; }
    .clock { text-align: center; width: 80px; line-height: 20px; }
    .zh { font-size: 14px; font-weight: 700; }
    .speed { position: absolute; left: 644px; top: 0; width: 128px; height: 50px; }
    .pct { position: absolute; left: 0; top: 1px; width: 52px; height: 48px; border-radius: 50%; border: 2px solid #c8c8c8; background: radial-gradient(circle at 50% 30%, #5cc878 0, #1c9a4c 55%, #0e6a30 100%); color: #eef; font: 14px/44px "Liberation Sans", sans-serif; text-align: center; }
    .pill { position: absolute; left: 42px; top: 7px; width: 85px; height: 36px; border-radius: 18px; background: linear-gradient(#f4f4f4, #cfcfcf); box-shadow: 0 1px 3px #666; font: 9.500px/14px "Liberation Sans", sans-serif; color: #333; }
    .pill div { position: absolute; left: 25px; }
    .pill .up { top: 4px; }
    .pill .dn { top: 18px; }
    .pill .ud { position: absolute; left: 10px; top: 6px; }
    .pill .pl { position: absolute; left: 62px; top: 6px; }
    .sogou { position: absolute; left: 993px; top: 15px; }
    .sbar { position: absolute; left: 21px; top: 3px; width: 186px; height: 24px; background: #fff; border: 1px solid #bcd0e4; display: flex; align-items: center; color: #1a80e0; font-weight: 700; font-size: 15px; justify-content: space-around; padding-left: 8px; }
    .slogo { position: relative; }
  `;

  // every item is as wide as the distance to the next one, the x values come from the data above
  seq(items: Item[], start: number, end: number): any {
    const lead = items.length ? items[0].x - start : 0;
    return html`${lead > 0 ? html`<span class="it" style="width:${lead}px"></span>` : ''}${items.map((it, n) => {
      const next = items[n + 1];
      const w = (next ? next.x : end) - it.x;
      return this.item(it, w);
    })}`;
  }

  item(it: Item, w: number) {
    const st = `width:${w}px`;
    if (it.k === 'seg') return html`<span class="it seg ${it.cls}" style=${st}>${this.seq(it.kids!, it.x, it.end!)}</span>`;
    if (it.k === 'i') return html`<span class="it" style=${st}>${ICONS[it.v]}</span>`;
    if (it.k === 't') return html`<span class="it ${it.cls}" style=${st}>${it.v}</span>`;
    if (it.k === 'a') return html`<span class="it" style=${st}><span class="arr"></span></span>`;
    if (it.k === 's') return html`<span class="it" style=${st}><span class="sep"></span></span>`;
    if (it.k === 'g') return html`<span class="it" style=${st}><span class="grip"></span></span>`;
    if (it.k === 'm') return html`<span class="it" style=${st}><span class="more">»</span></span>`;
    return html`<span class="it" style=${st}>${it.v}</span>`;
  }

  renderTree() {
    const folder = (open: boolean) => open
      ? html`<svg width="16" height="14" viewBox="0 0 16 14"><path d="M1 2h5l1 1h6v2H4l-3 7z" fill="#d8a848" stroke="#8a7040"/><path d="M1 13l3-8h11l-3 8z" fill="#f8e0a0" stroke="#8a7040"/></svg>`
      : html`<svg width="16" height="14" viewBox="0 0 16 14"><path d="M1 2h5l1 1h8v10H1z" fill="#f4cf68" stroke="#8a7040"/><path d="M2 5h12v7H2z" fill="#fbe49a"/></svg>`;
    const chev = (open: boolean) => open
      ? html`<svg class="chev" width="12" height="8" viewBox="0 0 12 8"><path d="M2 2l4 4 4-4" fill="none" stroke="#444" stroke-width="1.600"/></svg>`
      : html`<svg class="chev" width="12" height="10" viewBox="0 0 12 10"><path d="M4 1l4 4-4 4" fill="none" stroke="#aaa" stroke-width="1.600"/></svg>`;
    return NODES.map(([lv, label, kind, sel]) => lv === 0
      ? html`<div class="nd root">${chev(kind === 'o')}<span class="hz2"></span>${folder(kind === 'o')}<span class="lbl">${label}</span></div>`
      : html`<div class="nd ${lv === 1 ? 'kid' : 'last'} ${sel ?? ''}"><span class="hz"></span>${TREE[kind]}<span class="lbl">${label}</span></div>`);
  }

  renderCanvas() {
    const vline = (x: number, c: string) => svg`<rect x=${x} y="0" width="1" height="305" fill=${c}/>`;
    const hline = (y: number, c: string) => svg`<rect x="0" y=${y} width="1196" height="1" fill=${c}/>`;
    return html`<svg width="1196" height="305" viewBox="0 0 1196 305">
      <g shape-rendering="crispEdges">${rects([[0, 0, 54, 216], [93, 0, 362, 238], [838, 0, 358, 238]], '#a8c060')}</g>
      ${TEAL.map(([x, y]) => svg`<circle cx=${x} cy=${y} r="28" fill="#3f7a7a"/>`)}
      <g shape-rendering="crispEdges">
        ${rects([[0, 113, 54, 2], [93, 117, 362, 2], [838, 117, 358, 2], [333, 0, 2, 238], [959, 0, 2, 238]], '#b4589e')}
        ${rects([[263, 0, 22, 305], [1009, 0, 22, 305], [0, 70, 50, 22], [163, 70, 90, 22], [297, 55, 712, 28], [285, 193, 711, 23], [1043, 58, 88, 22]], '#00f000')}
        ${rects([[50, 70, 113, 22], [1130, 58, 66, 22]], '#4d4d4d')}
        ${rects([[251, 47, 46, 45], [356, 38, 62, 62], [996, 35, 46, 45], [1014, 80, 12, 68]], '#7a00f0')}
        ${STRIPES.map((y) => svg`<rect x="264" y=${y} width="20" height="3" fill="#ff0000"/><rect x="1010" y=${y} width="20" height="3" fill="#ff0000"/>`)}
        ${vline(106, '#7a0000')}${vline(273, '#1a1a00')}${vline(386, '#8a0000')}${vline(623, '#7a0000')}${vline(657, '#b00000')}${vline(1019, '#b00000')}${vline(1187, '#7a0000')}
        ${hline(69, '#c00000')}${hline(159, '#6a0000')}${hline(204, '#ff0000')}
      </g>
      <g fill="#8a7c96" font-size="9">
        <text x="233" y="114">横向受力筋:C14@150</text>
        <text x="979" y="121">横向受力筋:C14@150</text>
        <text transform="translate(336 18) rotate(90)">纵向受力筋:C14@150</text>
        <text transform="translate(961 18) rotate(90)">纵向受力筋:C14@150</text>
      </g>
      ${AXES.map(([x, y, t]) => svg`<ellipse cx=${x} cy=${y} rx="12" ry="13" fill="none" stroke="#0a7a1a"/>
        <text x=${x} y=${y + 5} text-anchor="middle" font-size="14" fill="#7a60c0" style="font-family:'Liberation Sans'">${t}</text>`)}
      <g fill="#8a80a8" font-size="13" style="font-family:'Liberation Sans'">
        <text transform="translate(259 217) rotate(-90)" letter-spacing="10">06</text>
        <text transform="translate(1005 217) rotate(-90)" letter-spacing="10">06</text>
      </g>
      <path d="M258.500 178v28c0 8 2 16 6 22" fill="none" stroke="#8a70c0"/>
      <path d="M1004.500 178v28c0 8 2 16 6 22" fill="none" stroke="#a070c0"/>
      <path d="M55 255V212" stroke="#00f000" stroke-width="3"/><path d="M55 206l4 12h-8z" fill="#00f000"/>
      <path d="M55 255h42" stroke="#ff0000" stroke-width="3"/><path d="M104 255l-12-4v8z" fill="#ff0000"/>
      <path d="M64 210l5 6 5-6M69 216v7" stroke="#00c000" fill="none"/>
      <path d="M92 234l10 10M102 234l-10 10" stroke="#e00000" fill="none"/>
    </svg>`;
  }

  renderTask() {
    const w = (c: string) => html`<svg width="22" height="22" viewBox="0 0 22 22">${c === 'fan' ? svg`<path d="M11 11C6 9 3 8 3 5s5-4 8-1c1 2 0 5 0 7zM11 11c2-5 3-8 6-8s4 5 1 8c-2 1-5 0-7 0zM11 11c5 2 8 3 8 6s-5 4-8 1c-1-2 0-5 0-7zM11 11c-2 5-3 8-6 8s-4-5-1-8c2-1 5 0 7 0z" fill="#e8e8e8"/>`
      : c === 'ie' ? svg`<path d="M19 13H6c1 5 9 5 11 1M5 10c0-6 10-7 12-1z" fill="none" stroke="#eee" stroke-width="2.500"/><path d="M3 18c3-8 10-13 17-15" stroke="#eee" fill="none"/>`
      : c === 'sw' ? svg`<circle cx="9" cy="12" r="7" fill="none" stroke="#bbb" stroke-width="2"/><circle cx="9" cy="12" r="3" fill="none" stroke="#bbb"/><path d="M14 8c0-4 1-6 3-6s3 2 3 6l2 2H12z" fill="#f0a818"/>`
      : c === 'edge' ? svg`<path d="M3 11C3 4 16 0 19 9c0 3 0 3-1 4H8c0 5 7 5 10 3v4c-7 3-15 0-15-9zM8 9h6c0-3-6-3-6 0z" fill="#0f78d4"/>`
      : c === 'iex' ? svg`<path d="M20 13H7c1 5 9 5 11 1M6 9c1-5 10-6 12 0z" fill="none" stroke="#2a9ae8" stroke-width="3"/><path d="M2 20C1 14 10 3 20 2c2 1 1 4-1 6M2 20c2 2 7 0 9-1" stroke="#f0c020" fill="none" stroke-width="1.400"/>`
      : c === 'folder' ? svg`<path d="M1 3h8l2 2h10v15H1z" fill="#f8d878"/><path d="M1 9h20v11H1z" fill="#fce8a8"/><rect x="6" y="14" width="10" height="6" fill="#5ab0e8"/><rect x="9" y="16" width="4" height="4" fill="#fce8a8"/>`
      : c === 'gs' ? svg`<path d="M14 2c-8 0-12 6-10 12 2 7 12 7 14 1 1-4-3-7-7-6 1-2 4-4 8-3 1-1 1-3-5-4zM11 12c2 0 3 2 2 3-2 2-4 0-3-2z" fill="#1e7fe0"/>`
      : svg`<circle cx="11" cy="11" r="10" fill="#7cc83c"/><path d="M5 11h12M6 8c2-4 8-4 10 0M6 14c2 4 8 4 10 0" stroke="#fff" fill="none" stroke-width="1.600"/>`}</svg>`;
    const cells: [number, any, string][] = [
      [48, html`<svg width="18" height="16" viewBox="0 0 18 16"><path d="M3 3h12v10H3z" fill="none" stroke="#fff" stroke-width="1.300"/><path d="M1 5v6h1M17 5v6h-1" stroke="#fff" fill="none"/></svg>`, ''],
      [51, w('fan'), ''], [52, w('ie'), ''], [52, w('sw'), ''], [51, w('edge'), ''], [49, w('iex'), ''], [49, w('folder'), 'open'], [49, gld(24), 'open on'], [49, w('gs'), 'open'], [49, w('green'), 'open'],
    ];
    const tray: Item[] = [
      T(949, '链接'), R(991, html`<div class="cpu"><div>52%</div><div>CPU使用</div></div>`),
      R(1058, html`<svg width="14" height="10" viewBox="0 0 14 10"><path d="M1 8l6-6 6 6" fill="none" stroke="#fff" stroke-width="1.300"/></svg>`),
      R(1082, html`<svg width="18" height="14" viewBox="0 0 18 14"><rect x="3" y="4" width="13" height="8" fill="#555" stroke="#fff"/><rect x="4" y="5" width="7" height="6" fill="#fff"/><path d="M3 1v4M6 1v4" stroke="#fff"/></svg>`),
      R(1108, html`<svg width="16" height="14" viewBox="0 0 16 14"><path d="M1 13C1 7 7 1 14 1M4 13c0-4 4-8 8-8M7 13c0-2 2-4 4-4" fill="none" stroke="#ccc"/><circle cx="10" cy="12" r="1.300" fill="#fff"/></svg>`),
      R(1130, html`<svg width="16" height="16" viewBox="0 0 16 16"><path d="M1 6h3l4-4v12l-4-4H1z" fill="none" stroke="#fff"/><path d="M11 5c1 2 1 4 0 6M13 3c2 3 2 7 0 10" fill="none" stroke="#fff"/></svg>`),
      R(1154, html`<svg width="23" height="16" viewBox="0 0 23 16"><rect x="1" y="1" width="21" height="14" fill="none" stroke="#fff"/><path d="M3 4h17M3 7h17M5 11h13" stroke="#fff" stroke-dasharray="1 1"/></svg>`),
      R(1186, html`<span class="zh">中</span>`),
      R(1214, html`<svg width="16" height="18" viewBox="0 0 16 18"><rect x="1" y="1" width="14" height="16" rx="3" fill="#f04a10" transform="rotate(-8 8 9)"/><path d="M11 5H6C5 5 5 8 6 8h4c2 0 2 4 0 4H5" fill="none" stroke="#fff" stroke-width="2"/></svg>`),
      R(1236, html`<div class="clock"><div>20:37</div><div>2018/2/8</div></div>`),
      R(1324, html`<svg width="34" height="34" viewBox="0 0 34 34"><rect x="1" y="7" width="15" height="14" fill="#fff"/><path d="M3 10h11M3 13h11M3 16h7" stroke="#333"/><circle cx="16" cy="22" r="9" fill="#333" stroke="#888"/><text x="16" y="26" text-anchor="middle" font-size="11" font-weight="700" fill="#fff" style="font-family:'Liberation Sans'">23</text></svg>`),
    ];
    return html`<div class="task">
      <div class="start"><svg width="18" height="18" viewBox="0 0 18 18"><path d="M1 3l7-1v6.500H1zM9 2l8-1v7.500H9zM1 9.500h7V16l-7-1zM9 9.500h8V17l-8-1z" fill="#fff"/></svg></div>
      <div class="search"><span class="ring"></span>在这里输入你要搜索的内容
        <svg class="mic" width="12" height="18" viewBox="0 0 12 18"><rect x="4" y="1" width="5" height="10" rx="2.500" fill="none" stroke="#999"/><path d="M2 8c0 5 9 5 9 0M6.500 13v3M3 17h7" stroke="#999" fill="none"/></svg></div>
      ${cells.map(([cw, ic, cls]) => html`<div class="tk ${cls}" style="width:${cw}px">${ic}</div>`)}
      <div class="row tray">${this.seq(tray, 891, 1366)}</div>
    </div>`;
  }

  render() {
    return html`
      <div class="title">${gld(15)}${this.seq(TITLE, 20, 1220)}
        <div class="winbtns">
          <span><svg width="10" height="10"><path d="M0 5h10" stroke="#222"/></svg></span>
          <span><svg width="11" height="11"><path d="M.5 2.500h8v8h-8zM2.500 2.500V.5h8v8h-2" fill="none" stroke="#222"/></svg></span>
          <span><svg width="12" height="12"><path d="M1 1l10 10M11 1L1 11" stroke="#222"/></svg></span>
        </div>
      </div>
      <div class="row menu">${this.seq(MENU, 0, 1366)}</div>
      <div class="row tb1">${this.seq(ROW1, 0, 1366)}</div>
      <div class="main">
        <div class="side">
          <div class="nav-h">模块导航栏<span class="tools">
            <svg width="10" height="12" viewBox="0 0 10 12"><path d="M3 1h4v5h2v1H1V6h2zM5 7v5" stroke="#fff" fill="none"/></svg>
            <svg width="9" height="9" viewBox="0 0 9 9"><path d="M1 1l7 7M8 1L1 8" stroke="#fff"/></svg></span></div>
          <div class="btn">工程设置</div>
          <div class="btn act">绘图输入</div>
          <div class="plus">
            <svg width="18" height="18" viewBox="0 0 18 18"><path d="M4 1v8M0 5h8M13 7v9M9 12h8" stroke="#1a5a4a" stroke-width="2.400"/></svg>
            <svg width="17" height="14" viewBox="0 0 17 14"><path d="M0 3h8M8 10h8" stroke="#1a5a4a" stroke-width="2.400"/></svg>
          </div>
          <div class="tree">
            <div class="nodes">${this.renderTree()}</div>
            <div class="tsb">
              <div class="sa"><svg width="10" height="6" viewBox="0 0 10 6"><path d="M1 5l4-4 4 4" fill="none" stroke="#444" stroke-width="1.500"/></svg></div>
              <div class="thumb"></div><div class="fill"></div>
              <div class="sa"><svg width="10" height="6" viewBox="0 0 10 6"><path d="M1 1l4 4 4-4" fill="none" stroke="#444" stroke-width="1.500"/></svg></div>
            </div>
          </div>
          <div class="btn gap">单构件输入</div>
          <div class="btn end">报表预览</div>
        </div>
        <div class="work">
          <div class="row r2">${this.seq(ROW2, 165, 1366)}</div>
          <div class="row r3">${this.seq(ROW3, 165, 1366)}</div>
          <div class="row r4">${this.seq(ROW4, 165, 1366)}</div>
          <div class="canvas">${this.renderCanvas()}</div>
          <div class="row snap">${this.seq(SNAP, 165, 1366)}</div>
          <div class="bottom">
            <div class="strip">
              <svg width="12" height="12" viewBox="0 0 12 12"><rect x=".5" y=".5" width="11" height="11" fill="#f4e8e8" stroke="#665"/><path d="M2 2l8 8M10 2l-8 8" stroke="#a04040" stroke-width="1.300"/></svg>
              <div class="dots"></div>
            </div>
            <div class="panel">
              <div class="row gbar">${this.seq(GRIDBAR, 183, 1364)}</div>
              <div class="thead">${COLS.map(([cw, t, c]) => html`<div class="c ${c ?? ''}" style="width:${cw}px">${t}</div>`)}</div>
              <div class="trow">${COLS.map(([cw], n) => html`<div class="c ${n === 0 ? 'rn' : n === 2 ? 'cur' : ''}" style="width:${cw}px">${n === 0 ? '1*' : ''}</div>`)}</div>
              <div class="blank"></div>
              <div class="hsb">
                <span class="sa"><svg width="7" height="10" viewBox="0 0 7 10"><path d="M5 1L1 5l4 4" fill="none" stroke="#333" stroke-width="1.500"/></svg></span>
                <span class="thumb"></span>
                <span class="sa end"><svg width="7" height="10" viewBox="0 0 7 10"><path d="M2 1l4 4-4 4" fill="none" stroke="#333" stroke-width="1.500"/></svg></span>
              </div>
            </div>
          </div>
        </div>
      </div>
      <div class="status">
        <div class="st" style="width:148px">X=16486 Y=5181</div>
        <div class="st" style="width:78px">层高:2.15m</div>
        <div class="st" style="width:98px">底标高:-2.2m</div>
        <div class="st" style="width:48px">0</div>
        <div class="st" style="width:914px">按鼠标左键指定第一个角点，或拾取构件图元</div>
        <div class="st" style="width:70px">116.3 FPS</div>
      </div>
      ${this.renderTask()}

      <div class="speed">
        <div class="pill">
          <div class="up">0.08K/s</div><div class="dn">0.08K/s</div>
          <svg class="ud" width="8" height="24" viewBox="0 0 8 24"><path d="M4 1l3 4H5v4H3V5H1z" fill="#d84a3a"/><path d="M4 23l3-4H5v-4H3v4H1z" fill="#3a9a4a"/></svg>
          <svg class="pl" width="22" height="24" viewBox="0 0 22 24"><circle cx="9" cy="14" r="8.500" fill="#2a74d8" stroke="#dde"/><path d="M9 10v8M5 14h8" stroke="#fff" stroke-width="2"/><circle cx="16" cy="6" r="4" fill="#e02a2a"/></svg>
        </div>
        <div class="pct">65%</div>
      </div>
      <div class="sogou">
        <div class="sbar">
          <span>中</span><span>°,</span>
          <svg width="18" height="18" viewBox="0 0 18 18"><circle cx="9" cy="9" r="8" fill="none" stroke="#1a80e0" stroke-width="1.800"/><circle cx="6" cy="7" r="1.300" fill="#1a80e0"/><circle cx="12" cy="7" r="1.300" fill="#1a80e0"/><path d="M5 11c2 3 6 3 8 0" fill="none" stroke="#1a80e0" stroke-width="1.500"/></svg>
          <svg width="14" height="18" viewBox="0 0 14 18"><rect x="4" y="1" width="6" height="11" rx="3" fill="#1a80e0"/><path d="M1 8c0 7 12 7 12 0M7 14v3" fill="none" stroke="#1a80e0" stroke-width="1.500"/></svg>
          <svg width="18" height="14" viewBox="0 0 18 14"><rect x="0" y="0" width="18" height="14" rx="2" fill="#1a80e0"/><path d="M2 3h14M2 6h14M4 10h10" stroke="#fff" stroke-dasharray="2 1"/></svg>
          <svg width="16" height="18" viewBox="0 0 16 18"><circle cx="7" cy="4" r="3.500" fill="#b8c4d0"/><path d="M1 16c0-6 3-7 6-7s6 1 6 7z" fill="#c8d2dc"/></svg>
          <svg width="16" height="16" viewBox="0 0 16 16"><path d="M5 1l3 1 3-1 5 4-2 3-2-1v8H4V7L2 8 0 5z" fill="#1a80e0"/></svg>
          <svg width="16" height="16" viewBox="0 0 16 16"><path d="M15 4l-3 3-3-3 3-3C8 0 5 3 6 7l-5 6c0 2 1 2 2 2l6-5c4 1 7-2 6-6z" fill="#1a80e0"/></svg>
        </div>
        <svg class="slogo" width="30" height="30" viewBox="0 0 30 30"><rect x="2" y="2" width="26" height="26" rx="5" fill="#f04a10" transform="rotate(-10 15 15)"/><path d="M21 9H11c-3 0-3 6 0 6h8c3 0 3 6 0 6H8" fill="none" stroke="#fff" stroke-width="3.500"/></svg>
      </div>
    `;
  }
}
